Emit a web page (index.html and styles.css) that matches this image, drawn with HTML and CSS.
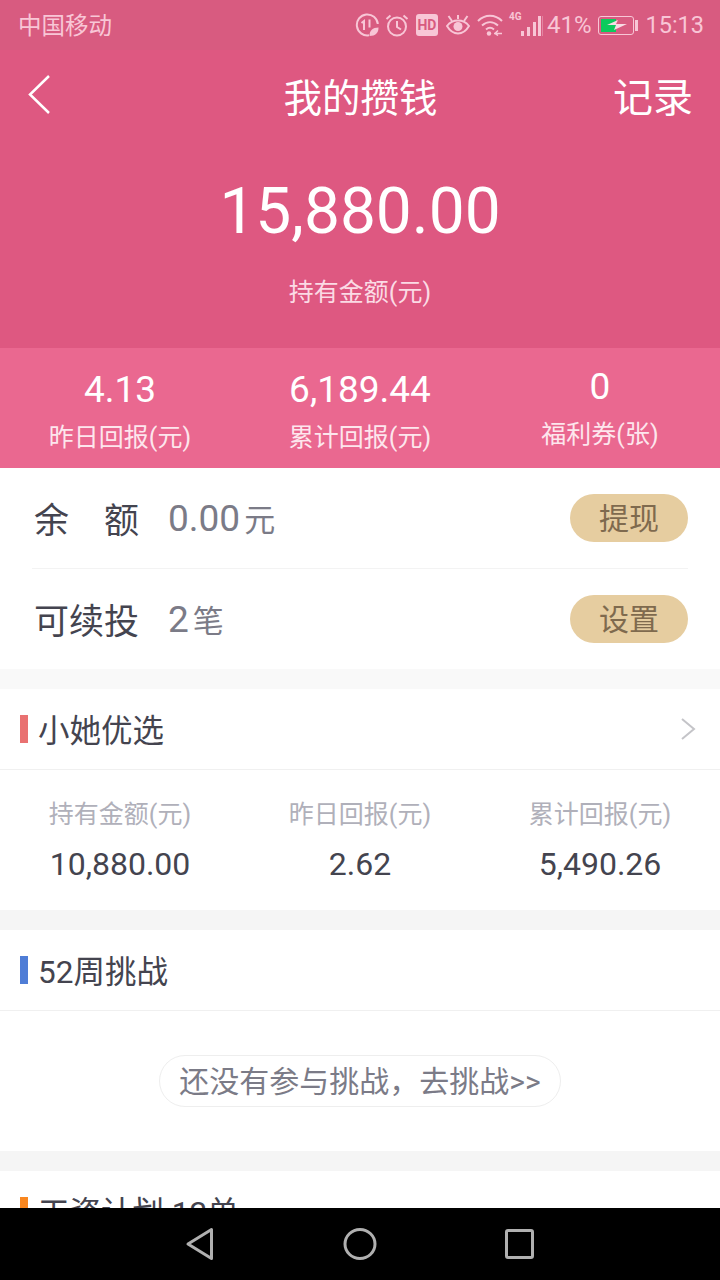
FILE: index.html
```html
<!DOCTYPE html>
<html lang="zh-CN">
<head>
  <meta charset="UTF-8" />
  <meta name="viewport" content="width=device-width, initial-scale=1.0"/>
  <title>我的攒钱</title>
  <link rel="stylesheet" href="styles.css">
</head>
<body>
  <div class="page">
    <div class="content">
      <div class="status-bar">
        <span class="carrier">中国移动</span>
        <div class="status-icons">
          <svg class="ic-data" width="24" height="24" viewBox="0 0 24 24" fill="none" stroke="#f8c6d6" stroke-width="2"><path d="M14 22.300A10.500 10.500 0 1 1 22.800 11"/><path d="M6.500 10l2.500-2v9M14.500 6.500v8" stroke-width="2"/><path d="M14.500 23c0-5.500 3-8.500 9-8.500 0 5.500-3 8.500-9 8.500z" fill="#f8c6d6" stroke="none"/></svg>
          <svg class="ic-alarm" width="24" height="24" viewBox="0 0 24 24" fill="none" stroke="#f8c6d6" stroke-width="2"><circle cx="12" cy="13.500" r="9"/><path d="M12 8v6l4 2.500M1.500 6l4-3.500M22.500 6l-4-3.500"/></svg>
          <span class="hd">HD</span>
          <svg class="ic-eye" width="24" height="22" viewBox="0 0 24 22" fill="none" stroke="#f8c6d6" stroke-width="2"><path d="M1 12c3-4 7-5.500 11-5.500S20 8 23 12c-3 5-7 7.500-11 7.500S4 17 1 12z"/><circle cx="12" cy="12.500" r="4.500" fill="#f8c6d6" stroke="none"/><path d="M2.500 2l3.500 5M21.500 2L18 7M12 1v4"/></svg>
          <svg class="ic-wifi" width="26" height="22" viewBox="0 0 26 22" fill="none" stroke="#f8c6d6" stroke-width="2"><path d="M1 7c7-7 17-7 24 0M5 11.500c5-4.500 11-4.500 16 0M9 15.500c3-2.500 5-2.500 8 0"/><circle cx="12" cy="19.500" r="2.200" fill="#f8c6d6" stroke="none"/><path d="M17 19.500h8M21 16.500l-3 3 3 2" stroke-width="1.500"/></svg>
          <span class="net">4G</span>
          <svg class="signal" width="22" height="20" viewBox="0 0 22 20" fill="#f8c6d6"><rect x="0" y="15" width="3" height="5"/><rect x="6" y="11" width="3" height="9"/><rect x="12" y="6" width="3" height="14"/><rect x="17" y="0" width="3" height="20"/><rect x="21" y="0" width="1" height="20" opacity="0.4"/></svg>
          <span class="pct">41%</span>
          <div class="battery"><div class="battery-fill"></div><svg class="bolt" width="22" height="12" viewBox="0 0 22 12"><path d="M1 6l11-5-2 4h11L8 11l2-5z" fill="#f8dbe4"/></svg></div>
          <div class="battery-tip"></div>
          <span class="clock">15:13</span>
        </div>
      </div>

      <header class="hero">
        <div class="top-nav">
          <svg class="back" width="24" height="42" viewBox="0 0 24 42" fill="none" stroke="#fff" stroke-width="2.500"><path d="M21 2L2 20.500 21 39"/></svg>
          <h1>我的攒钱</h1>
          <span class="records">记录</span>
        </div>
        <div class="amount">15,880.00</div>
        <div class="amount-label">持有金额(元)</div>
      </header>

      <div class="band">
        <div class="band-item"><b>4.13</b><span>昨日回报(元)</span></div>
        <div class="band-item"><b>6,189.44</b><span>累计回报(元)</span></div>
        <div class="band-item band-item-up"><b>0</b><span>福利券(张)</span></div>
      </div>

      <section class="balance">
        <div class="balance-row">
          <span class="balance-name spaced"><i>余</i><i>额</i></span>
          <span class="balance-val">0.00<small>元</small></span>
          <a class="pill">提现</a>
        </div>
        <div class="balance-row">
          <span class="balance-name">可续投</span>
          <span class="balance-val">2<small>笔</small></span>
          <a class="pill">设置</a>
        </div>
      </section>

      <section class="card card-first">
        <div class="card-head">
          <span class="mark mark-red"></span>
          <h2>小她优选</h2>
          <svg class="chevron" width="16" height="22" viewBox="0 0 16 22" fill="none" stroke="#c4c4c8" stroke-width="2"><path d="M2 1l12 10L2 21"/></svg>
        </div>
        <div class="stats">
          <div class="stat"><span>持有金额(元)</span><b>10,880.00</b></div>
          <div class="stat"><span>昨日回报(元)</span><b>2.62</b></div>
          <div class="stat"><span>累计回报(元)</span><b>5,490.26</b></div>
        </div>
      </section>

      <section class="card">
        <div class="card-head">
          <span class="mark mark-blue"></span>
          <h2>52周挑战</h2>
        </div>
        <div class="challenge">
          <a class="challenge-link">还没有参与挑战，去挑战&gt;&gt;</a>
        </div>
      </section>

      <section class="card">
        <div class="card-head">
          <span class="mark mark-orange"></span>
          <h2>工资计划 12单</h2>
        </div>
      </section>
    </div>

    <nav class="nav-bar">
      <svg width="30" height="34" viewBox="0 0 30 34" fill="none" stroke="#b0b0b0" stroke-width="3" stroke-linejoin="round"><path d="M26.500 2.500v29L3 17z"/></svg>
      <svg width="34" height="34" viewBox="0 0 34 34" fill="none" stroke="#b0b0b0" stroke-width="3"><ellipse cx="17" cy="17" rx="15" ry="14.500"/></svg>
      <svg width="30" height="32" viewBox="0 0 30 32" fill="none" stroke="#b0b0b0" stroke-width="3" stroke-linejoin="round"><rect x="1.500" y="2.500" width="26" height="27" rx="1.500"/></svg>
    </nav>
  </div>
</body>
</html>
```

FILE: styles.css
```css
* {
  box-sizing: border-box;
  margin: 0;
  padding: 0;
}

body {
  font-family: Roboto, 'Noto Sans CJK SC', sans-serif;
  background-color: white;
}

.page {
  display: flex;
  flex-direction: column;
  height: 1280px;
  overflow: hidden;
}

.content {
  height: 1208px;
  overflow: hidden;
  background-color: #f5f5f5;
}

.status-bar {
  height: 50px;
  display: flex;
  align-items: center;
  justify-content: space-between;
  padding: 0 16px 0 18px;
  background-color: #d85b80;
  color: #f8c6d6;
}

.carrier {
  margin-bottom: 3px;
  font-size: 23.500px;
}

.status-icons {
  display: flex;
  align-items: center;
}

.ic-data {
  margin-right: 6px;
}

.ic-alarm {
  margin-right: 7px;
}

.hd {
  width: 22px;
  height: 22px;
  margin-right: 8px;
  background-color: #f8c6d6;
  border-radius: 3px;
  color: #d85b80;
  font-size: 14px;
  font-weight: 700;
  line-height: 22px;
  text-align: center;
}

.ic-eye {
  margin-right: 7px;
}

.net {
  width: 12px;
  margin: -18px 0 0 6px;
  font-size: 10px;
  font-weight: 700;
}

.signal {
  margin-top: 2px;
}

.pct {
  margin-left: 4px;
  font-size: 24px;
}

.battery {
  position: relative;
  width: 36px;
  height: 19px;
  margin-left: 7px;
  padding: 2px;
  border: 1px solid #f8c6d6;
  border-radius: 3px;
}

.battery-fill {
  width: 15px;
  height: 13px;
  background-color: #0ccb5c;
}

.bolt {
  position: absolute;
  left: 7px;
  top: 2px;
}

.battery-tip {
  width: 3px;
  height: 11px;
  margin: 0 7px 0 1px;
  background-color: #f8c6d6;
}

.clock {
  font-size: 23.500px;
}

.hero {
  height: 298px;
  background-color: #de5881;
  color: white;
  text-align: center;
}

.top-nav {
  display: grid;
  grid-template-columns: 1fr auto 1fr;
  align-items: center;
  height: 96px;
  padding: 0 27px 6px 28px;
}

.top-nav h1 {
  font-size: 38.500px;
  font-weight: 400;
}

.records {
  font-size: 40px;
  text-align: right;
}

.amount {
  margin-top: 26px;
  font-size: 64px;
  line-height: 80px;
}

.amount-label {
  margin-top: 23px;
  font-size: 25px;
  line-height: 36px;
  color: #fbdbe5;
}

.band {
  display: grid;
  grid-template-columns: repeat(3, 1fr);
  height: 120px;
  background-color: #ea6890;
  color: white;
  text-align: center;
}

.band-item {
  display: flex;
  flex-direction: column;
  padding-top: 21px;
}

.band-item-up {
  padding-top: 18px;
}

.band-item b {
  font-size: 37px;
  font-weight: 400;
  line-height: 42px;
}

.band-item span {
  margin-top: 9px;
  font-size: 25px;
  line-height: 36px;
  color: #fde6ed;
}

.balance {
  padding: 0 32px;
  background-color: white;
}

.balance-row {
  display: flex;
  align-items: center;
  height: 100px;
}

.balance-row:first-child {
  height: 101px;
  border-bottom: 1px solid #f3f3f3;
}

.balance-name {
  display: flex;
  justify-content: space-between;
  width: 105px;
  margin: 0 29px 2px 2px;
  font-size: 35px;
  color: #44444f;
}

.balance-name i {
  font-style: normal;
}

.balance-val {
  flex: 1;
  margin-bottom: 2px;
  font-size: 37px;
  color: #7b7b87;
}

.balance-val small {
  margin-left: 4px;
  font-size: 31px;
}

.pill {
  width: 118px;
  height: 48px;
  background-color: #e6cda0;
  border-radius: 24px;
  color: #7f6a4e;
  font-size: 30px;
  line-height: 50px;
  text-align: center;
}

.card {
  margin-top: 20px;
  background-color: white;
}

.card-first {
  box-shadow: 0 -20px 0 #f9f9f9;
}

.card-head {
  display: flex;
  align-items: center;
  height: 81px;
  padding: 0 24px 0 20px;
  border-bottom: 1px solid #f0f0f0;
}

.mark {
  width: 8px;
  height: 28px;
  margin-right: 10px;
}

.mark-red {
  background-color: #e97171;
}

.mark-blue {
  background-color: #4f7dd6;
}

.mark-orange {
  background-color: #f98720;
}

.card-head h2 {
  flex: 1;
  margin-bottom: 3px;
  font-size: 31.500px;
  font-weight: 400;
  color: #44444f;
}

.stats {
  display: grid;
  grid-template-columns: repeat(3, 1fr);
  height: 140px;
  padding-top: 27px;
  text-align: center;
}

.stat {
  display: flex;
  flex-direction: column;
}

.stat span {
  font-size: 25px;
  line-height: 36px;
  color: #b0b0ba;
}

.stat b {
  margin-top: 11px;
  font-size: 32px;
  font-weight: 400;
  line-height: 40px;
  color: #44444f;
}

.challenge {
  display: flex;
  justify-content: center;
  height: 140px;
  padding-top: 44px;
}

.challenge-link {
  width: 402px;
  height: 52px;
  border: 1px solid #eeeeee;
  border-radius: 26px;
  color: #7b7b87;
  font-size: 30px;
  line-height: 52px;
  text-align: center;
}

.nav-bar {
  display: flex;
  align-items: center;
  justify-content: center;
  gap: 128px;
  height: 72px;
  background-color: black;
}
```
